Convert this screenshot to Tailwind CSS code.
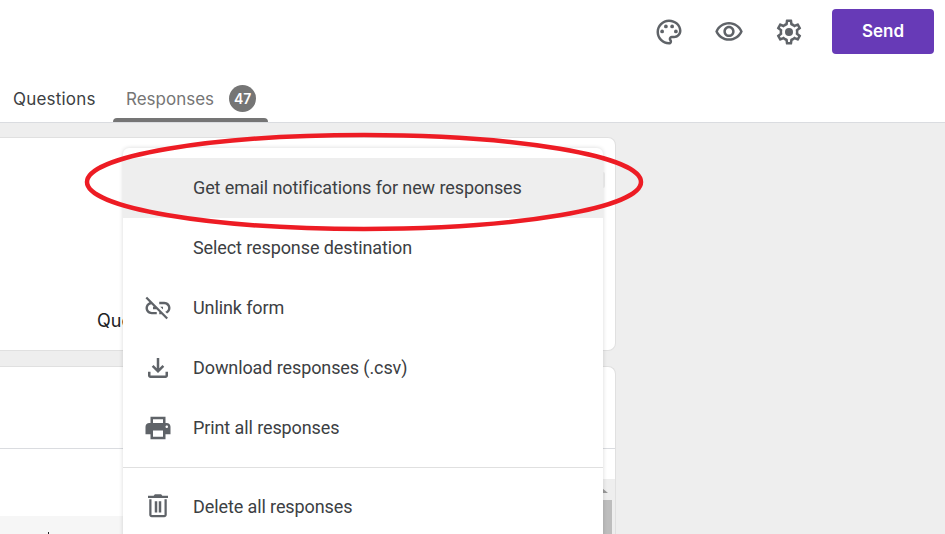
<!DOCTYPE html>
<html>
<head>
<meta charset="utf-8">
<script src="https://cdn.jsdelivr.net/npm/@tailwindcss/browser@4"></script>
</head>
<body class="m-0 font-['Roboto',sans-serif]">
<div class="relative w-[945px] h-[534px] overflow-hidden bg-[#eeeeee] flex flex-col">
  <header class="h-[123px] shrink-0 bg-white border-b border-[#dadce0] flex flex-col">
    <div class="flex items-start justify-end pr-[11px] pt-[9px] h-[72px]">
      <div class="flex items-center gap-[30px] h-[46px] text-[#5f6368] mr-[28px]">
        <svg class="w-[30px] h-[30px]" viewBox="0 0 24 24" fill="currentColor"><path d="M12 22C6.49 22 2 17.51 2 12S6.49 2 12 2s10 4.04 10 9c0 3.31-2.69 6-6 6h-1.77c-.28 0-.5.22-.5.5 0 .12.05.23.13.33.41.47.64 1.06.64 1.67 0 1.38-1.12 2.5-2.5 2.5zm0-18c-4.41 0-8 3.59-8 8s3.59 8 8 8c.28 0 .5-.22.5-.5 0-.16-.08-.28-.14-.35-.41-.46-.63-1.05-.63-1.65 0-1.38 1.12-2.5 2.5-2.5H16c2.21 0 4-1.79 4-4 0-3.86-3.59-7-8-7z"/><circle cx="6.5" cy="11.5" r="1.5"/><circle cx="9.5" cy="7.5" r="1.5"/><circle cx="14.5" cy="7.5" r="1.5"/><circle cx="17.5" cy="11.5" r="1.5"/></svg>
        <svg class="w-[30px] h-[30px]" viewBox="0 0 24 24" fill="currentColor"><path d="M12 6c3.79 0 7.17 2.13 8.82 5.5C19.17 14.87 15.79 17 12 17s-7.17-2.13-8.82-5.5C4.83 8.13 8.21 6 12 6m0-2C7 4 2.73 7.11 1 11.5 2.73 15.89 7 19 12 19s9.27-3.11 11-7.5C21.27 7.11 17 4 12 4zm0 5c1.38 0 2.5 1.12 2.5 2.5S13.38 14 12 14s-2.5-1.12-2.5-2.5S10.62 9 12 9m0-2c-2.48 0-4.5 2.02-4.5 4.5S9.52 16 12 16s4.5-2.02 4.5-4.5S14.48 7 12 7z"/></svg>
        <svg class="w-[30px] h-[30px]" viewBox="0 0 24 24" fill="currentColor"><path d="M19.43 12.98c.04-.32.07-.64.07-.98 0-.34-.03-.66-.07-.98l2.11-1.65c.19-.15.24-.42.12-.64l-2-3.46c-.09-.16-.26-.25-.44-.25-.06 0-.12.01-.17.03l-2.49 1c-.52-.4-1.08-.73-1.69-.98l-.38-2.65C14.46 2.18 14.25 2 14 2h-4c-.25 0-.46.18-.49.42l-.38 2.65c-.61.25-1.17.59-1.69.98l-2.49-1c-.06-.02-.12-.03-.18-.03-.17 0-.34.09-.43.25l-2 3.46c-.13.22-.07.49.12.64l2.11 1.65c-.04.32-.07.65-.07.98 0 .33.03.66.07.98l-2.11 1.65c-.19.15-.24.42-.12.64l2 3.46c.09.16.26.25.44.25.06 0 .12-.01.17-.03l2.49-1c.52.4 1.08.73 1.69.98l.38 2.65c.03.24.24.42.49.42h4c.25 0 .46-.18.49-.42l.38-2.65c.61-.25 1.17-.59 1.69-.98l2.49 1c.06.02.12.03.18.03.17 0 .34-.09.43-.25l2-3.46c.12-.22.07-.49-.12-.64l-2.11-1.65zm-1.98-1.71c.04.31.05.52.05.73 0 .21-.02.43-.05.73l-.14 1.13.89.7 1.08.84-.7 1.21-1.27-.51-1.04-.42-.9.68c-.43.32-.84.56-1.25.73l-1.06.43-.16 1.13-.2 1.35h-1.4l-.19-1.35-.16-1.13-1.06-.43c-.43-.18-.83-.41-1.23-.71l-.91-.7-1.06.43-1.27.51-.7-1.21 1.08-.84.89-.7-.14-1.13c-.03-.31-.05-.54-.05-.74s.02-.43.05-.73l.14-1.13-.89-.7-1.08-.84.7-1.21 1.27.51 1.04.42.9-.68c.43-.32.84-.56 1.25-.73l1.06-.43.16-1.13.2-1.35h1.39l.19 1.35.16 1.13 1.06.43c.43.18.83.41 1.23.71l.91.7 1.06-.43 1.27-.51.7 1.21-1.07.85-.89.7.14 1.13z"/><circle cx="12" cy="12" r="3.2"/></svg>
      </div>
      <button class="w-[102px] h-[45px] rounded-[4px] bg-[#673ab7] text-white text-[17px] font-semibold font-['Inter',sans-serif]">Send</button>
    </div>
    <div class="flex h-[50px] font-['Inter',sans-serif] text-[17px] leading-[26px]">
      <div class="pl-[13px] w-[113px] pt-[14px] text-[#3c4043] tracking-[0.2px]">Questions</div>
      <div class="relative w-[155px] pl-[13px] pt-[14px] text-[#757575] flex gap-[15px] items-start">
        <span>Responses</span>
        <span class="w-[27px] h-[27px] mt-[-1px] rounded-full bg-[#757575] text-white text-[14px] font-semibold flex items-center justify-center">47</span>
        <div class="absolute left-0 right-0 bottom-0 h-[4px] rounded-t-[4px] bg-[#757575]"></div>
      </div>
    </div>
  </header>
  <main class="flex-1 pt-[14px] flex flex-col gap-[15px] w-[616px]">
    <section class="h-[214px] shrink-0 bg-white border border-l-0 border-[#e0e0e0] rounded-r-lg flex flex-col justify-end pl-[97px] pb-[16px] text-[18px] text-[#202124] font-['Inter',sans-serif]">Questions</section>
    <section class="relative flex-1 bg-white border border-l-0 border-b-0 border-[#e0e0e0] rounded-tr-lg overflow-hidden">
      <div class="h-[82px] border-b border-[#dadce0]"></div>
      <div class="h-[67px]"></div>
      <div class="h-[40px] bg-[#f6f6f6] pl-[48px] pt-[16px]"><div class="w-[1px] h-[2px] bg-[#202124]"></div></div>
      <div class="absolute right-0 top-[112px] bottom-0 w-[13px] bg-[#eeeeee]">
        <svg class="mt-[9px] w-[6px] h-[5px] block" viewBox="0 0 6 5" fill="#9a9a9a"><polygon points="0,0 6,5 0,5"/></svg>
        <div class="mt-[7px] h-[40px] w-[10px] bg-[#bdbdbd]"></div>
      </div>
    </section>
  </main>

  <div class="absolute left-[123px] top-[148px] w-[480px] h-[400px] bg-white rounded-t-[6px] shadow-[0_0_4px_rgba(0,0,0,0.16)] pt-[10px] text-[18px] tracking-[-0.1px] text-[#3c4043]">
    <div class="relative h-[60px] bg-[#eeeeee] flex items-center pl-[70px] pb-[2px]">Get email notifications for new responses<div class="absolute right-[-2px] top-[14px] h-[16px] w-[2px] rounded-r-full bg-[#e4e4e4]"></div></div>
    <div class="h-[60px] flex items-center pl-[70px] pb-[2px]">Select response destination</div>
    <div class="relative h-[60px] flex items-center pl-[70px] pb-[2px]">
      <svg class="absolute left-[20px] top-[15px] w-[30px] h-[30px] text-[#5f6368]" viewBox="0 0 24 24" fill="currentColor"><path d="M17 7h-4v1.9h4c1.71 0 3.1 1.39 3.1 3.1 0 1.43-.98 2.63-2.31 2.98l1.46 1.46C20.88 15.61 22 13.95 22 12c0-2.76-2.24-5-5-5zm-1 4h-2.19l2 2H16zM2 4.27l3.11 3.11C3.29 8.12 2 9.91 2 12c0 2.76 2.24 5 5 5h4v-1.9H7c-1.71 0-3.1-1.39-3.1-3.1 0-1.59 1.21-2.9 2.76-3.07L8.73 11H8v2h2.73L13 15.27V17h1.73l4.01 4L20 19.74 3.27 3 2 4.27z"/></svg>
      Unlink form</div>
    <div class="relative h-[60px] flex items-center pl-[70px] pb-[2px]">
      <svg class="absolute left-[20px] top-[15px] w-[30px] h-[30px] text-[#5f6368]" viewBox="0 0 24 24" fill="currentColor"><path d="M18 15v3H6v-3H4v3c0 1.1.9 2 2 2h12c1.1 0 2-.9 2-2v-3h-2zm-1-4l-1.41-1.41L13 12.17V4h-2v8.17L8.41 9.59 7 11l5 5 5-5z"/></svg>
      Download responses (.csv)</div>
    <div class="relative h-[60px] flex items-center pl-[70px] pb-[2px]">
      <svg class="absolute left-[20px] top-[15px] w-[30px] h-[30px] text-[#5f6368]" viewBox="0 0 24 24" fill="currentColor" fill-rule="evenodd"><path d="M19 8h-1V3H6v5H5c-1.66 0-3 1.34-3 3v6h4v4h12v-4h4v-6c0-1.66-1.34-3-3-3zM8 5h8v3H8zm8 14H8v-5h8zm3-7c-.55 0-1-.45-1-1s.45-1 1-1 1 .45 1 1-.45 1-1 1z"/></svg>
      Print all responses</div>
    <div class="h-[10px] border-b border-[#e0e0e0]"></div>
    <div class="relative h-[60px] mt-[8px] flex items-center pl-[70px]">
      <svg class="absolute left-[20px] top-[15px] w-[30px] h-[30px] text-[#5f6368]" viewBox="0 0 24 24" fill="currentColor"><path d="M9.5 2.6h5l1 1.2h4.5v1.8H4V3.8h4.5z"/><path d="M5 6.6v12.4c0 1.1.9 2 2 2h10c1.1 0 2-.9 2-2V6.6h-1.8V19.2H6.8V6.6z"/><rect x="9.4" y="8.2" width="2" height="9"/><rect x="12.6" y="8.2" width="2" height="9"/></svg>
      Delete all responses</div>
  </div>

  <svg class="absolute left-0 top-0 pointer-events-none" width="945" height="534" viewBox="0 0 945 534" fill="none"><ellipse cx="364" cy="182" rx="277" ry="47" stroke="#ed1c24" stroke-width="4.5"/></svg>
</div>
</body>
</html>
